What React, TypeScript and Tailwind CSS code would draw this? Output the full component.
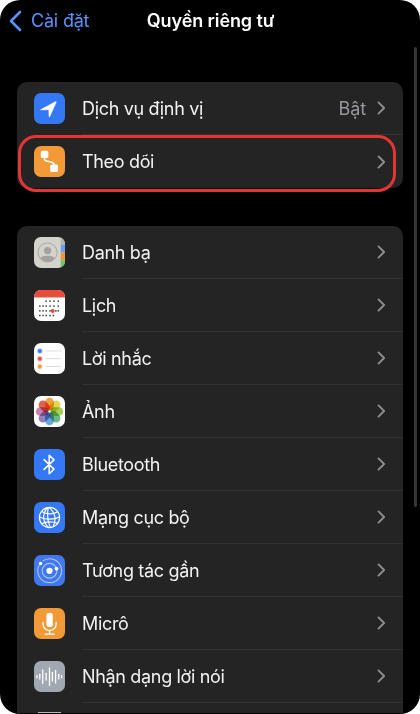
import React from 'react';

const dots = [
  [12.5, 11.5], [16.5, 11.5], [20.5, 11.5], [25, 11.5],
  [6, 16.5], [9.3, 16.5], [12.5, 16.5], [16.5, 16.5], [20.5, 16.5], [25, 16.5],
  [6, 21.5], [9.3, 21.5], [12.5, 21.5], [16.5, 21.5], [22.5, 21.5], [25, 21.5],
  [6, 26.3], [9.3, 26.3], [12.5, 26.3], [16.5, 26.3], [20, 26.3],
];

const petals = ['#efa23c', '#dfd64b', '#a5ce5a', '#6bb88a', '#69a9df', '#8f83bf', '#c583ad', '#e5604b'];

const waves = [[3, 1], [6, 2.5], [9, 7], [12.5, 3.5], [16, 9], [19, 4.5], [22.3, 6.5], [25.5, 2.5], [28.5, 1]];

const glyphs: Record<string, { bg: string; art: React.ReactNode }> = {
  location: {
    bg: '#3478f6',
    art: <path d="M7 17.1 22.3 8.9c.5-.3.9.1.7.7L16.4 24.3c-.3.7-1 .6-1-.1l-.1-6.3-.5-.5-7.5.1c-.8 0-1-.1-.3-.4Z" fill="#fff" stroke="#fff" strokeWidth=".4" />,
  },
  tracking: {
    bg: '#f19a37',
    art: (
      <>
        <path d="M10.8 11v1.8c0 1.6.8 2.3 2.3 2.7l5 1.2c1.8.4 2.7 1 2.7 2.5v2" fill="none" stroke="#fff" strokeWidth="1.7" />
        <rect x="7" y="5" width="7.8" height="7.4" rx="1.6" fill="#fff" />
        <rect x="16.7" y="19.2" width="8" height="7.6" rx="1.6" fill="#fff" />
      </>
    ),
  },
  contacts: {
    bg: '#d3d3cb',
    art: (
      <>
        <rect x="27.6" width="5" height="8" fill="#aeb3b5" />
        <rect x="27.6" y="8" width="5" height="8" fill="#68a2ef" />
        <rect x="27.6" y="16" width="5" height="8" fill="#ee9938" />
        <rect x="27.6" y="24" width="5" height="8" fill="#6dc66a" />
        <circle cx="14" cy="16" r="9.9" fill="none" stroke="#a6a6a2" strokeWidth="1" />
        <circle cx="14" cy="14" r="3.8" fill="#a3a29f" />
        <path d="M6.5 22c1.5-2.1 4-2.7 7.5-2.7s6 .6 7.5 2.7a9.5 9.5 0 0 1-7.5 3.5A9.5 9.5 0 0 1 6.5 22Z" fill="#a3a29f" />
      </>
    ),
  },
  calendar: {
    bg: '#ffffff',
    art: (
      <>
        <rect width="32" height="7.7" fill="#e84c3d" />
        {dots.map(([x, y]) => (
          <rect key={`${x}-${y}`} x={x - 0.7} y={y - 0.7} width="1.5" height="1.5" fill="#333" />
        ))}
        <circle cx="19.3" cy="21.6" r="2.1" fill="#ec4b3c" />
      </>
    ),
  },
  reminders: {
    bg: '#ffffff',
    art: (
      <>
        {['#3478f6', '#e55649', '#f09a38'].map((c, i) => (
          <g key={c}>
            <circle cx="6" cy={8.2 + i * 8} r="2.9" fill={c} opacity=".35" />
            <circle cx="6" cy={8.2 + i * 8} r="2" fill={c} />
            <path d={`M12 ${8.2 + i * 8}h16`} stroke="#d9d9db" strokeWidth=".9" />
          </g>
        ))}
      </>
    ),
  },
  photos: {
    bg: '#ffffff',
    art: (
      <g className="isolate">
        {petals.map((c, i) => (
          <rect key={c} x="11.6" y="1.9" width="8.8" height="13" rx="4.4" fill={c} className="mix-blend-multiply" transform={`rotate(${i * 45} 16 16)`} />
        ))}
      </g>
    ),
  },
  bluetooth: {
    bg: '#3478f6',
    art: <path d="m10.4 11 10.3 9.8-5 4.8V6.4l5 4.8-10.3 9.8" fill="none" stroke="#fff" strokeWidth="1.6" strokeLinejoin="round" strokeLinecap="round" />,
  },
  network: {
    bg: '#3478f6',
    art: (
      <g fill="none" stroke="#fff" strokeWidth="1.25">
        <circle cx="16" cy="16" r="10.4" />
        <path d="M7.9 9.8c5 3.2 11.8 3.4 16.6.2M5.8 15.4c5.6 3.1 15 3.1 20.4.1M8 22.4c4-2.4 11.8-2.5 16.3-.4" />
        <path d="M14 5.9c-5.2 5-5.8 14 .7 20.2M14.7 5.9c-1.2 6.3-.5 14.4 2 20.2M15.5 5.8c6.2 4.5 8 12.7 4.2 19.5" />
      </g>
    ),
  },
  nearby: {
    bg: '#4178ee',
    art: (
      <>
        <g fill="none" stroke="#a9c5fb" strokeWidth="1.15">
          <circle cx="16" cy="16.3" r="7.6" />
          <path d="M8.9 6.3a12.3 12.3 0 1 1-3.5 4" />
        </g>
        <circle cx="16" cy="16.3" r="3.2" fill="#fff" />
        <circle cx="6.8" cy="8.8" r="1.8" fill="#fff" />
        <circle cx="23.2" cy="14" r="1.9" fill="#fff" />
      </>
    ),
  },
  mic: {
    bg: '#f19a37',
    art: (
      <>
        <rect x="12.8" y="5" width="6.6" height="14.7" rx="3.3" fill="#fff" />
        <path d="M9.3 14.8v1.7a6.8 6.8 0 0 0 13.6 0v-1.7M16.1 23.4v3M11.5 26.9h9.2" fill="none" stroke="#fff" strokeWidth="1.4" strokeLinecap="round" />
      </>
    ),
  },
  speech: {
    bg: '#a2a8b2',
    art: (
      <>
        {waves.map(([x, h]) => (
          <path key={x} d={`M${x} ${16.2 - h}v${h * 2}`} stroke="#fff" strokeWidth="1.3" strokeLinecap="round" />
        ))}
      </>
    ),
  },
};

function AppIcon({ name }: { name: string }) {
  const { bg, art } = glyphs[name];
  return (
    <span className="block size-[31px] shrink-0 overflow-hidden rounded-[7px]" style={{ backgroundColor: bg }}>
      <svg viewBox="0 0 32 32" className="block size-full">{art}</svg>
    </span>
  );
}

interface RowProps { icon: string; label: string; value?: string; last?: boolean }

function Row({ icon, label, value, last }: RowProps) {
  return (
    <div className="flex h-[53px] shrink-0 items-stretch pl-[17px]">
      <div className="flex items-center pr-[17px]"><AppIcon name={icon} /></div>
      <div className={`flex flex-1 items-center pr-[17px] ${last ? '' : 'border-b border-[#323233]'}`}>
        <span className="flex-1 tracking-[-0.33px] whitespace-nowrap">{label}</span>
        {value && <span className="mr-[11px] tracking-[-0.1px] text-[#98989e]">{value}</span>}
        <svg viewBox="0 0 9 14" className="h-3.5 w-[9px]" fill="none" stroke="#8e8e92" strokeWidth="1.9" strokeLinecap="round" strokeLinejoin="round">
          <path d="M1.5 1.4 7.1 7l-5.6 5.6" />
        </svg>
      </div>
    </div>
  );
}

const rows: RowProps[] = [
  { icon: 'contacts', label: 'Danh bạ' },
  { icon: 'calendar', label: 'Lịch' },
  { icon: 'reminders', label: 'Lời nhắc' },
  { icon: 'photos', label: 'Ảnh' },
  { icon: 'bluetooth', label: 'Bluetooth' },
  { icon: 'network', label: 'Mạng cục bộ' },
  { icon: 'nearby', label: 'Tương tác gần' },
  { icon: 'mic', label: 'Micrô' },
  { icon: 'speech', label: 'Nhận dạng lời nói' },
];

export default function App() {
  return (
    <div className="h-[714px] w-[420px] overflow-hidden bg-white">
      <main className="relative flex h-full flex-col overflow-hidden rounded-[20px] bg-black px-[17px] font-['Inter','Liberation_Sans',sans-serif] text-[18px] text-[#f2f2f3]">
        <header className="-mx-[17px] grid h-[82px] shrink-0 grid-cols-[1fr_auto_1fr] items-start pt-[7px] leading-7">
          <a className="flex h-7 items-center pl-[9px] text-[#5a93f8]">
            <svg viewBox="0 0 13 22" className="mr-[9px] h-[22px] w-[13px]" fill="none" stroke="currentColor" strokeWidth="2.6" strokeLinecap="round" strokeLinejoin="round">
              <path d="M11 2 2 11l9 9" />
            </svg>
            <span className="tracking-[-0.2px]">Cài đặt</span>
          </a>
          <h1 className="pl-px font-semibold tracking-[-0.1px] text-white">Quyền riêng tư</h1>
        </header>

        <section className="relative mb-[38px] flex h-[106px] shrink-0 flex-col rounded-[10px] bg-[#242424]">
          <Row icon="location" label="Dịch vụ định vị" value="Bật" />
          <Row icon="tracking" label="Theo dõi" last />
          <div className="absolute top-[53px] left-[1px] h-[57px] w-[378px] rounded-[18px] border-[3px] border-[#e43434]" />
        </section>

        <section className="flex h-[487px] shrink-0 flex-col overflow-hidden rounded-t-[10px] bg-[#242424]">
          {rows.map((row) => <Row key={row.icon} {...row} />)}
          <div className="flex flex-1 items-end pl-[17px]">
            <span className="mx-1 h-px w-[23px] bg-[#b5b5b5]" />
          </div>
        </section>

        <div className="absolute top-[47px] right-[3px] h-[460px] w-[3px] rounded-full bg-[#353535]" />
      </main>
    </div>
  );
}
